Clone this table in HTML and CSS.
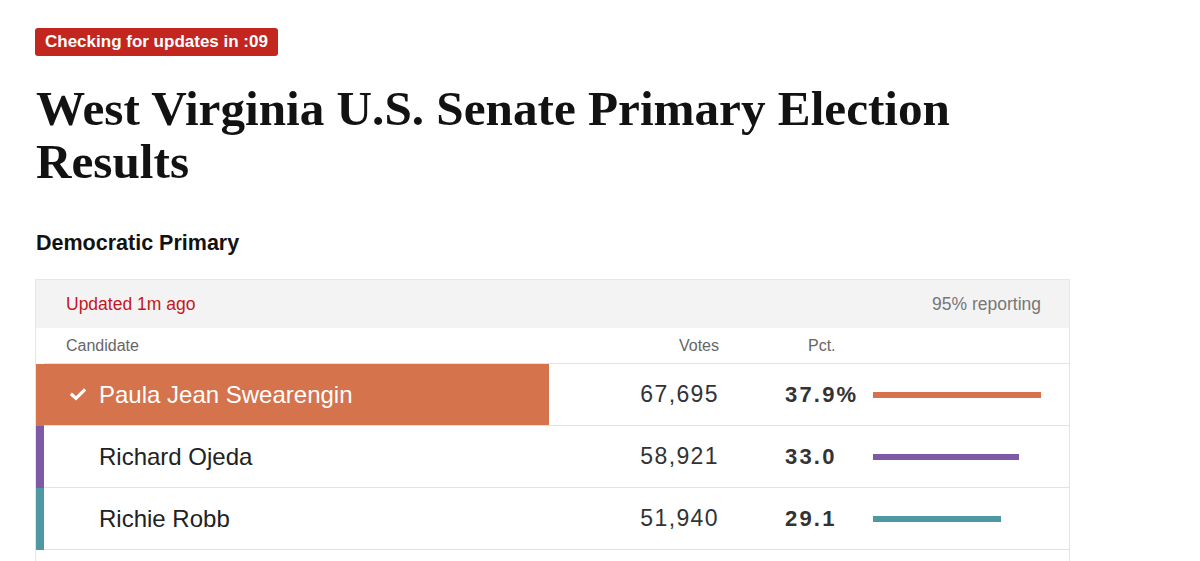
FILE: index.html
```html
<!DOCTYPE html>
<html lang="en">
<head>
<meta charset="utf-8">
<title>West Virginia U.S. Senate Primary Election Results</title>
<link rel="stylesheet" href="styles.css">
</head>
<body>
<main class="page">
  <div class="badge">Checking for updates in :09</div>
  <h1 class="title">West Virginia U.S. Senate Primary Election Results</h1>
  <h2 class="race">Democratic Primary</h2>
  <section class="results">
    <div class="meta">
      <span class="updated">Updated 1m ago</span>
      <span class="reporting">95% reporting</span>
    </div>
    <div class="row head">
      <div class="swatch"></div>
      <div class="cells">
        <div class="name">Candidate</div>
        <div class="votes">Votes</div>
        <div class="pct">Pct.</div>
        <div class="bar-cell"></div>
      </div>
    </div>
    <div class="row winner">
      <div class="swatch sw-orange"></div>
      <div class="cells">
        <div class="name"><span class="check-slot"><svg class="check" width="16" height="13" viewBox="0 0 16 13"><path d="M2 6.8 L6 10.4 L14 2.4" fill="none" stroke="#fff" stroke-width="3.2" stroke-linecap="square" stroke-linejoin="miter"/></svg></span>Paula Jean Swearengin</div>
        <div class="votes">67,695</div>
        <div class="pct">37.9%</div>
        <div class="bar-cell"><div class="bar bar-orange" style="width:168px"></div></div>
      </div>
    </div>
    <div class="row">
      <div class="swatch sw-purple"></div>
      <div class="cells">
        <div class="name"><span class="check-slot"></span>Richard Ojeda</div>
        <div class="votes">58,921</div>
        <div class="pct">33.0</div>
        <div class="bar-cell"><div class="bar bar-purple" style="width:146px"></div></div>
      </div>
    </div>
    <div class="row">
      <div class="swatch sw-teal"></div>
      <div class="cells">
        <div class="name"><span class="check-slot"></span>Richie Robb</div>
        <div class="votes">51,940</div>
        <div class="pct">29.1</div>
        <div class="bar-cell"><div class="bar bar-teal" style="width:128px"></div></div>
      </div>
    </div>
    <div class="foot"></div>
  </section>
</main>
</body>
</html>
```
FILE: styles.css
```css
* { box-sizing: border-box; }
html, body { margin: 0; padding: 0; background: #fff; }
body { font-family: "Liberation Sans", Arial, sans-serif; color: #121212; }

.page { padding: 28px 0 0 35px; width: 1070px; }

.badge {
  display: inline-block;
  background: #c2261e;
  color: #fff;
  font-weight: bold;
  font-size: 17px;
  line-height: 28px;
  height: 28px;
  padding: 0 10px;
  border-radius: 3px;
}

.title {
  margin: 26px 0 0 1px;
  font-family: "Liberation Serif", "Times New Roman", serif;
  font-weight: bold;
  font-size: 49.2px;
  line-height: 53px;
  color: #121212;
  width: 960px;
}

.race {
  margin: 43px 0 0 1px;
  font-size: 21.5px;
  line-height: 24px;
  font-weight: bold;
  color: #121212;
}

.results {
  margin-top: 24px;
  border: 1px solid #e6e6e6;
  border-bottom: none;
  width: 1035px;
}

.meta {
  display: flex;
  justify-content: space-between;
  align-items: center;
  height: 48px;
  background: #f3f3f3;
  padding: 0 28px 0 30px;
  font-size: 17.5px;
}
.updated { color: #c4161c; }
.reporting { color: #777; }

.row { display: flex; }
.swatch { width: 8px; flex: none; }
.sw-orange { background: #d4734c; }
.sw-purple { background: #7e5aa6; }
.sw-teal { background: #4e98a4; }

.cells {
  flex: 1;
  display: flex;
  align-items: center;
  height: 62px;
  border-bottom: 1px solid #e2e2e2;
}
.head .cells { height: 36px; }

.name {
  width: 505px;
  height: 100%;
  display: flex;
  align-items: center;
  padding-left: 26px;
  font-size: 24px;
  color: #222;
}
.head .name { font-size: 16px; color: #666; padding-left: 22px; }
.check-slot { width: 29px; flex: none; display: flex; align-items: center; }
.winner .name { background: #d4734c; color: #fff; }

.votes {
  width: 170px;
  text-align: right;
  font-size: 23px;
  letter-spacing: 1.4px;
  color: #333;
}
.head .votes { font-size: 16px; letter-spacing: 0; color: #666; }

.pct {
  width: 154px;
  padding-left: 66px;
  font-size: 22px;
  font-weight: bold;
  letter-spacing: 2.2px;
  color: #333;
}
.head .pct { font-size: 16px; font-weight: normal; letter-spacing: 0; color: #666; padding-left: 89px; }

.bar-cell { flex: 1; display: flex; align-items: center; }
.bar { height: 6px; }
.bar-orange { background: #d4734c; }
.bar-purple { background: #7e5aa6; }
.bar-teal { background: #4e98a4; }

.foot { height: 12px; }
```
